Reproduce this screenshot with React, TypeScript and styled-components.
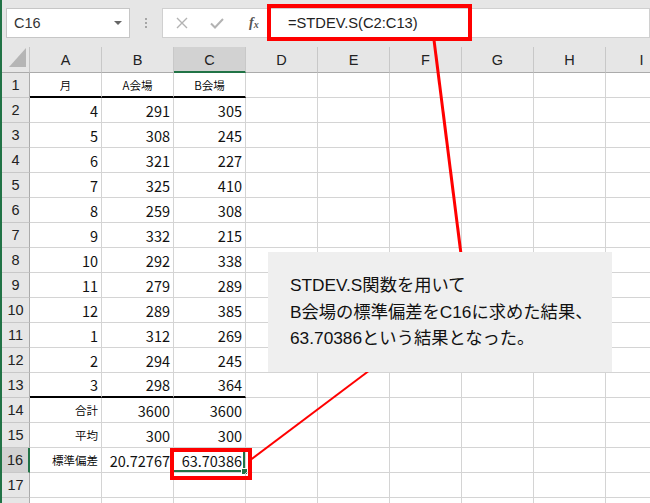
import * as React from 'react';
import styled, { createGlobalStyle } from 'styled-components';

const GlobalStyle = createGlobalStyle`
  html, body {
    margin: 0;
    padding: 0;
    background: #ffffff;
  }
  body {
    font-family: "Liberation Sans", "Noto Sans CJK JP", sans-serif;
  }
`;

const COLS = ['A', 'B', 'C', 'D', 'E', 'F', 'G', 'H', 'I'];

type CellValue = string | number;

const monthA = [4, 5, 6, 7, 8, 9, 10, 11, 12, 1, 2, 3];
const venueA = [291, 308, 321, 325, 259, 332, 292, 279, 289, 312, 294, 298];
const venueB = [305, 245, 227, 410, 308, 215, 338, 289, 385, 269, 245, 364];

const dataRows: CellValue[][] = [
  ['月', 'A会場', 'B会場'],
  ...monthA.map((m, i) => [m, venueA[i], venueB[i]]),
  ['合計', 3600, 3600],
  ['平均', 300, 300],
  ['標準偏差', '20.72767', '63.70386'],
];

// 17 numbered rows, plus the top sliver of row 18 at the window's bottom edge
const VISIBLE_ROWS = 17;
const TOTAL_ROWS = VISIBLE_ROWS + 1;

export default function App() {
  return (
    <Page>
      <GlobalStyle />
      <FormulaBar>
        <NameBox>
          <span>C16</span>
          <DropArrow />
        </NameBox>
        <Grip>
          <i />
          <i />
          <i />
        </Grip>
        <FxButtons>
          <FxIcon>
            <svg width="12" height="12" viewBox="0 0 12 12">
              <path d="M1 1 L11 11 M11 1 L1 11" stroke="#b3b3b3" strokeWidth="1.4" fill="none" />
            </svg>
          </FxIcon>
          <FxIcon>
            <svg width="14" height="11" viewBox="0 0 14 11">
              <path d="M1 5.5 L5 9.5 L13 1" stroke="#b3b3b3" strokeWidth="2" fill="none" />
            </svg>
          </FxIcon>
          <FxLabel>
            f<sub>x</sub>
          </FxLabel>
        </FxButtons>
        <FormulaInput>=STDEV.S(C2:C13)</FormulaInput>
      </FormulaBar>

      <Sheet>
        <Corner>
          <svg width="17" height="20" viewBox="0 0 17 20">
            <polygon points="17,0 17,19 0,19" fill="#b5b5b5" />
          </svg>
        </Corner>
        {COLS.map((c) => (
          <ColHeader key={c} $active={c === 'C'}>
            {c}
          </ColHeader>
        ))}
        {Array.from({ length: TOTAL_ROWS }, (_, r) => {
          const rowNo = r + 1;
          const values = dataRows[r] ?? [];
          const isHeadRow = rowNo === 1;
          const isLabelRow = rowNo >= 14 && rowNo <= 16;
          const thick = rowNo === 1 || rowNo === 13;
          return (
            <React.Fragment key={rowNo}>
              <RowHeader $active={rowNo === 16}>{rowNo <= VISIBLE_ROWS ? rowNo : ''}</RowHeader>
              {COLS.map((c, ci) => {
                const v = values[ci];
                const small = isHeadRow || (isLabelRow && ci === 0);
                const align = isHeadRow ? 'center' : 'right';
                const selected = rowNo === 16 && c === 'C';
                return (
                  <Cell
                    key={c}
                    $align={align}
                    $small={small}
                    $thick={thick && ci < 3}
                    $selected={selected}
                  >
                    {v}
                    {selected && <FillHandle />}
                  </Cell>
                );
              })}
            </React.Fragment>
          );
        })}
      </Sheet>

      <Leaders width="650" height="503" viewBox="0 0 650 503">
        <line x1="434" y1="40" x2="462" y2="262" stroke="#ff0000" strokeWidth="3" />
        <line x1="378" y1="364" x2="249" y2="461" stroke="#ff0000" strokeWidth="2" />
      </Leaders>

      <FormulaMark />
      <CellMark />

      <Callout>
        <p>STDEV.S関数を用いて</p>
        <p>B会場の標準偏差をC16に求めた結果、</p>
        <p>63.70386という結果となった。</p>
      </Callout>
    </Page>
  );
}

const Page = styled.div`
  position: relative;
  width: 650px;
  height: 503px;
  overflow: hidden;
  background: #e6e6e6;
  border-left: 2px solid #217346;
  box-sizing: border-box;
`;

const FormulaBar = styled.div`
  display: flex;
  align-items: stretch;
  height: 30px;
  padding: 8px 0 9px 4px;
`;

const NameBox = styled.div`
  width: 124px;
  box-sizing: border-box;
  background: #ffffff;
  border: 1px solid #c6c6c6;
  display: flex;
  align-items: center;
  justify-content: space-between;
  padding: 0 7px 0 7px;
  font-size: 14.5px;
  color: #333333;
`;

const DropArrow = styled.div`
  width: 0;
  height: 0;
  border-left: 4px solid transparent;
  border-right: 4px solid transparent;
  border-top: 4px solid #666666;
`;

const Grip = styled.div`
  width: 32px;
  display: flex;
  flex-direction: column;
  align-items: center;
  justify-content: center;
  gap: 2px;

  i {
    display: block;
    width: 2px;
    height: 2px;
    background: #a6a6a6;
  }
`;

const FxButtons = styled.div`
  width: 106px;
  box-sizing: border-box;
  background: #ffffff;
  border: 1px solid #d0d0d0;
  border-right: none;
  display: flex;
  align-items: center;
  padding-left: 12px;
  gap: 21px;
`;

const FxIcon = styled.div`
  width: 14px;
  display: flex;
  align-items: center;
  justify-content: center;
`;

const FxLabel = styled.div`
  margin-left: 4px;
  font-family: "Liberation Serif", serif;
  font-style: italic;
  font-weight: bold;
  font-size: 14px;
  color: #555555;

  sub {
    font-size: 10px;
    vertical-align: -1px;
  }
`;

const FormulaInput = styled.div`
  flex: 1;
  background: #ffffff;
  border: 1px solid #d0d0d0;
  display: flex;
  align-items: center;
  padding-left: 19px;
  font-size: 14.7px;
  color: #222222;
`;

const Sheet = styled.div`
  display: grid;
  grid-template-columns: 28px repeat(9, 72px);
  grid-template-rows: 26px repeat(${TOTAL_ROWS}, 25px);
  background: #ffffff;
`;

const Corner = styled.div`
  background: #e6e6e6;
  border-right: 1px solid #c4c4c4;
  border-bottom: 1px solid #ababab;
  box-sizing: border-box;
  display: flex;
  align-items: flex-end;
  justify-content: flex-end;
  padding: 0 3px 4px 0;
`;

const ColHeader = styled.div<{ $active?: boolean }>`
  background: ${({ $active }) => ($active ? '#d2d2d2' : '#e6e6e6')};
  border-right: 1px solid #c8c8c8;
  border-bottom: ${({ $active }) => ($active ? '2px solid #217346' : '1px solid #ababab')};
  box-sizing: border-box;
  display: flex;
  align-items: center;
  justify-content: center;
  padding-top: ${({ $active }) => ($active ? '1px' : '0')};
  font-size: 14.5px;
  color: #222222;
`;

const RowHeader = styled.div<{ $active?: boolean }>`
  background: ${({ $active }) => ($active ? '#d2d2d2' : '#e6e6e6')};
  border-bottom: 1px solid #c8c8c8;
  border-right: ${({ $active }) => ($active ? '2px solid #217346' : '1px solid #ababab')};
  box-sizing: border-box;
  display: flex;
  align-items: center;
  justify-content: center;
  font-size: 14.5px;
  color: #222222;
`;

const Cell = styled.div<{ $align: 'center' | 'right'; $small?: boolean; $thick?: boolean; $selected?: boolean }>`
  position: relative;
  box-sizing: border-box;
  border-right: 1px solid #d4d4d4;
  border-bottom: ${({ $thick }) => ($thick ? '2px solid #000000' : '1px solid #d4d4d4')};
  display: flex;
  align-items: center;
  justify-content: ${({ $align }) => ($align === 'center' ? 'center' : 'flex-end')};
  padding: 2px 3px 0 3px;
  font-family: "Noto Sans CJK JP", sans-serif;
  font-size: ${({ $small }) => ($small ? '11.5px' : '14.5px')};
  font-weight: ${({ $small }) => ($small ? 350 : 400)};
  line-height: 1;
  color: ${({ $small }) => ($small ? '#000000' : '#111111')};
  box-shadow: ${({ $selected }) => ($selected ? 'inset -2px -2px 0 #217346' : 'none')};
`;

const FillHandle = styled.span`
  position: absolute;
  right: -3px;
  bottom: -3px;
  width: 5px;
  height: 5px;
  background: #217346;
  border: 1px solid #ffffff;
`;

const Leaders = styled.svg`
  position: absolute;
  left: -2px;
  top: 0;
  pointer-events: none;
`;

const RedFrame = styled.div`
  position: absolute;
  border: 4px solid #ff0000;
  box-sizing: border-box;
  pointer-events: none;
`;

const FormulaMark = styled(RedFrame)`
  left: 265px;
  top: 4px;
  width: 205px;
  height: 37px;
`;

const CellMark = styled(RedFrame)`
  left: 168px;
  top: 448px;
  width: 82px;
  height: 32px;
`;

const Callout = styled.div`
  position: absolute;
  left: 266px;
  top: 252px;
  width: 344px;
  height: 120px;
  box-sizing: border-box;
  background: #efefef;
  padding: 20px 0 0 22px;
  font-family: "Liberation Sans", "Noto Sans CJK JP", sans-serif;
  font-size: 17.3px;
  line-height: 26.5px;
  color: #111111;

  p {
    margin: 0;
    white-space: nowrap;
  }
`;
